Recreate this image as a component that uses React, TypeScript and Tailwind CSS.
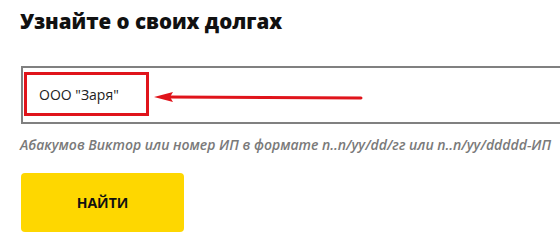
import React from "react";

export default function App() {
  return (
    <div className="w-[560px] h-[240px] bg-white overflow-hidden pl-[21px] pt-[7px]" style={{ fontFamily: '"Open Sans", sans-serif' }}>
      <h1 className="text-[20.5px] leading-[28px] font-extrabold text-[#111] -ml-[1px]">Узнайте о своих долгах</h1>
      <div className="relative mt-[31px] h-[58px] w-[560px] border-2 border-[#808080]">
        <div className="absolute left-[1px] top-[4px] w-[125px] h-[44px] border-[3px] border-[#e0141b] flex items-center pl-[12px]">
          <span className="text-[14px] text-[#222]">ООО "Заря"</span>
        </div>
        <svg className="absolute left-[130px] top-[22px]" width="212" height="14" viewBox="0 0 212 14">
          <path d="M16 7 L208 8" stroke="#e0141b" strokeWidth="3" strokeLinecap="round" />
          <path d="M1 7 L20 2 L17 7 L20 12 Z" fill="#e0141b" />
        </svg>
      </div>
      <p className="mt-[11px] text-[14px] font-semibold italic text-[#7a7a7a] -ml-[1px] leading-[19px] whitespace-nowrap">
        Абакумов Виктор или номер ИП в формате n..n/yy/dd/гг или n..n/yy/ddddd-ИП
      </p>
      <button className="mt-[19px] w-[163px] h-[59px] bg-[#fed700] rounded-[4px] text-[14px] font-bold text-[#111]">
        НАЙТИ
      </button>
    </div>
  );
}
